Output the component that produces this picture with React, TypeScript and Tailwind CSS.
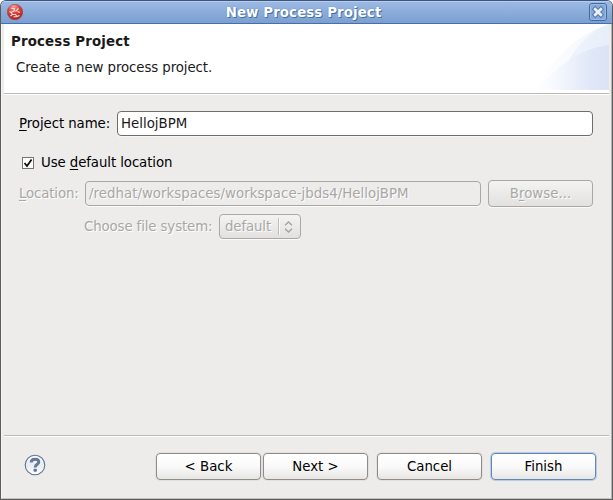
import React from "react";

function Accel({ children }: { children: string }) {
  return <span className="underline decoration-1 underline-offset-2">{children}</span>;
}

function ProjectIcon() {
  return (
    <svg width="16" height="16" viewBox="0 0 16 16">
      <defs>
        <radialGradient id="ball" cx="0.4" cy="0.15" r="0.9">
          <stop offset="0" stopColor="#efa39b" />
          <stop offset="0.45" stopColor="#d6453c" />
          <stop offset="1" stopColor="#b01b18" />
        </radialGradient>
      </defs>
      <circle cx="8" cy="8" r="7.7" fill="url(#ball)" stroke="#a33a40" strokeWidth="0.6" />
      <path
        d="M4.5 4.5H7.2V7L4 8.5 2.5 7.5M8.5 7.5 11.5 4.5M10.5 7.5 13 8.5M4 8.5 5.5 10.5 3.5 12M5.5 10.5H8.5L10 12.5 12.5 11.5M6.5 12.8H10"
        fill="none"
        stroke="#fae0dc"
        strokeWidth="1.1"
      />
    </svg>
  );
}

function CloseIcon() {
  return (
    <svg width="18" height="18" viewBox="0 0 18 18">
      <rect x="0.5" y="0.5" width="17" height="17" rx="2.5" fill="#86a9da" stroke="#46699c" />
      <rect x="1.5" y="1.5" width="15" height="15" rx="1.5" fill="none" stroke="#9bb9e3" />
      <path d="M6.2 6.2 11.8 11.8M11.8 6.2 6.2 11.8" stroke="#5379b0" strokeWidth="4.8" strokeLinecap="square" />
      <path d="M6.2 6.2 11.8 11.8M11.8 6.2 6.2 11.8" stroke="#eaf0fa" strokeWidth="2.8" strokeLinecap="square" />
    </svg>
  );
}

function BannerArt() {
  return (
    <svg width="76" height="66" viewBox="0 0 76 66" className="block">
      <defs>
        <linearGradient id="outer" gradientUnits="userSpaceOnUse" x1="2" x2="76" y1="0" y2="0">
          <stop offset="0" stopColor="#ffffff" />
          <stop offset="0.5" stopColor="#f8fafe" />
          <stop offset="1" stopColor="#edf2fb" />
        </linearGradient>
        <linearGradient id="inner" gradientUnits="userSpaceOnUse" x1="2" x2="76" y1="0" y2="0">
          <stop offset="0" stopColor="#ffffff" />
          <stop offset="0.3" stopColor="#f5f8fd" />
          <stop offset="0.75" stopColor="#e0e7f7" />
          <stop offset="1" stopColor="#dbe3f6" />
        </linearGradient>
      </defs>
      <path d="M2 66C16 40 38 13 76 0V66Z" fill="url(#outer)" />
      <path d="M34 40C42 24 56 8 76 0V40Z" fill="#e3ebf9" opacity="0.45" />
      <path d="M2 66C22 46 43 25 76 21V66Z" fill="url(#inner)" />
    </svg>
  );
}

function HelpIcon() {
  return (
    <svg width="22" height="22" viewBox="0 0 22 22">
      <defs>
        <linearGradient id="help" x1="0" x2="0" y1="0" y2="1">
          <stop offset="0" stopColor="#ffffff" />
          <stop offset="0.5" stopColor="#e9ebee" />
          <stop offset="1" stopColor="#ffffff" />
        </linearGradient>
      </defs>
      <circle cx="11" cy="11" r="9.8" fill="url(#help)" stroke="#5b7498" strokeWidth="1.1" />
      <path
        d="M7.2 8.4C7.2 6 8.6 5.2 11 5.2S14.8 6.1 14.8 8C14.8 10.4 11.2 10.2 11.2 13.4"
        fill="none"
        stroke="#647a9b"
        strokeWidth="3"
      />
      <rect x="9.6" y="14.8" width="3.2" height="3" rx="0.8" fill="#5e7496" />
    </svg>
  );
}

function Button({ label, primary = false }: { label: string; primary?: boolean }) {
  return (
    <button
      className={
        "h-[27px] w-[105px] rounded-[4px] border bg-linear-to-b from-white via-[#fafafa] via-50% to-[#e7e6e4] text-center text-black " +
        (primary
          ? "border-[#6485b0] shadow-[0_0_0_1px_#b9cce7]"
          : "border-[#8f8b88] shadow-[0_0_0_1px_#e3e1df]")
      }
    >
      {label}
    </button>
  );
}

export default function App() {
  return (
    <div className="h-[500px] w-[613px] bg-white font-['DejaVu_Sans',sans-serif] text-[13.333px] leading-4 text-[#1a1a1a]">
      <div className="flex h-[500px] flex-col overflow-hidden rounded-t-[6px] border border-[#5c5c5c] border-t-[#3d5579] bg-[#edeceb]">
        <header className="-mx-px flex h-[23px] shrink-0 items-center border-x border-b border-x-[#46679a] border-b-[#4a6ea6] bg-linear-to-b from-[#9dbae4] to-[#7a9fd1] pr-[5px] pl-[6px] shadow-[inset_0_1px_0_#b5cdef]">
          <ProjectIcon />
          <h1 className="flex-1 pt-px pr-[5px] text-center font-bold tracking-[0.12px] text-white [text-shadow:1px_1px_0_#4b70a6,0_0_1px_#4b70a6]">
            New Process Project
          </h1>
          <CloseIcon />
        </header>

        <main className="flex flex-1 flex-col border-r border-b border-l border-r-[#b9b7b5] border-b-[#c4c2c0] border-l-[#f5f4f3] px-[2px]">
          <section className="flex h-[69px] shrink-0 justify-between bg-white">
            <div className="pt-[10px] pl-[7px]">
              <h2 className="font-bold tracking-[0.17px]">Process Project</h2>
              <p className="mt-[10px] pl-[5px] tracking-[-0.09px]">Create a new process project.</p>
            </div>
            <BannerArt />
          </section>
          <div className="h-[2px] shrink-0 border-b border-white bg-[#bcbab8]" />

          <form className="flex flex-1 flex-col pr-4 pl-[15px]" onSubmit={(e) => e.preventDefault()}>
            <div className="mt-4 flex h-[25px] items-center text-black">
              <label className="w-[98px] shrink-0 tracking-[-0.08px]">
                <Accel>P</Accel>roject name:
              </label>
              <div className="flex h-[25px] flex-1 items-center rounded-[4px] border border-[#6f6c69] bg-white pl-[3px] text-[#1a1a1a] shadow-[0_1px_0_#f8f8f7]">
                HellojBPM
              </div>
            </div>

            <div className="mt-[19px] flex h-4 items-center text-black">
              <span className="mb-px ml-[3px] flex size-[12px] items-center justify-center border border-[#777471] bg-white">
                <svg width="10" height="10" viewBox="0 0 10 10">
                  <path d="M1.5 5 4 8 8.6 1.5" fill="none" stroke="#111" strokeWidth="1.8" />
                </svg>
              </span>
              <span className="ml-[7px] tracking-[-0.09px]">
                Use <Accel>d</Accel>efault location
              </span>
            </div>

            <div className="mt-[9px] flex h-[27px] items-center text-[#a9a7a5] [text-shadow:1px_1px_0_#fff]">
              <span className="w-[66px] shrink-0 tracking-[-0.15px]">
                <Accel>L</Accel>ocation:
              </span>
              <div className="flex h-[25px] w-[396px] items-center rounded-[4px] border border-[#a9a7a5] pl-[3px] tracking-[0.03px] shadow-[0_1px_0_#fafaf9]">
                /redhat/workspaces/workspace-jbds4/HellojBPM
              </div>
              <div className="ml-[7px] flex h-[27px] w-[105px] items-center justify-center rounded-[4px] border border-[#aaa8a6] bg-linear-to-b from-[#f3f3f2] to-[#e2e1df] shadow-[0_1px_0_#fafaf9]">
                <span>
                  B<Accel>r</Accel>owse...
                </span>
              </div>
            </div>

            <div className="mt-[7px] flex h-[25px] items-center pl-[65px] text-[#a9a7a5] [text-shadow:1px_1px_0_#fff]">
              <span className="w-[135px] shrink-0 tracking-[-0.12px]">Choose file system:</span>
              <div className="flex h-[25px] w-[82px] items-center rounded-[4px] border border-[#aaa8a6] bg-linear-to-b from-[#f3f3f2] to-[#e2e1df] pl-[5px] shadow-[0_1px_0_#fafaf9]">
                <span className="w-[53px] tracking-[-0.12px]">default</span>
                <span className="h-[17px] w-px bg-[#bebcba] shadow-[1px_0_0_#fafafa]" />
                <svg className="ml-[5px]" width="9" height="12" viewBox="0 0 9 12">
                  <path d="M1 4.2 4.5 1 8 4.2M1 7.8 4.5 11 8 7.8" fill="none" stroke="#a5a3a1" strokeWidth="1.3" />
                </svg>
              </div>
            </div>
          </form>

          <div className="h-[2px] shrink-0 border-b border-white bg-[#bcbab8]" />
          <footer className="flex h-[61px] shrink-0 items-start pt-4 pr-[13px] pl-5">
            <span className="pt-[1px]">
              <HelpIcon />
            </span>
            <div className="ml-auto flex">
              <Button label="< Back" />
              <span className="w-[2px]" />
              <Button label="Next >" />
              <span className="w-[9px]" />
              <Button label="Cancel" />
              <span className="w-[9px]" />
              <Button label="Finish" primary />
            </div>
          </footer>
        </main>
      </div>
    </div>
  );
}
